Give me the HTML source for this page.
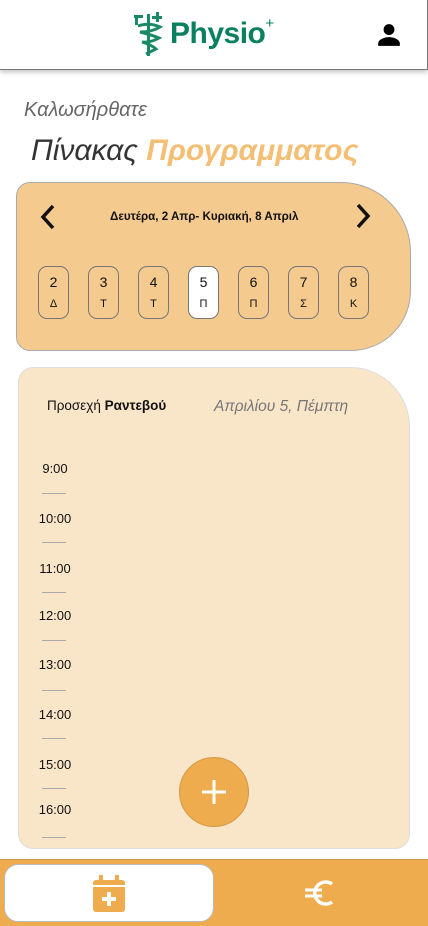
<!DOCTYPE html>
<html><head><meta charset="utf-8"><style>
*{margin:0;padding:0;box-sizing:border-box}
body{width:428px;height:926px;position:relative;background:#fff;font-family:"Liberation Sans","DejaVu Sans",sans-serif;overflow:hidden}
.hdr{position:absolute;left:0;top:0;width:428px;height:70px;border:1px solid #777;border-top:none;border-left:none;box-shadow:0 2px 5px rgba(0,0,0,.25);background:#fff}
.logo{position:absolute;left:170px;top:17px;font-size:30px;font-weight:bold;color:#0a8060;letter-spacing:-0.5px}
.logo sup{font-size:15px;position:relative;top:-4px;font-weight:normal}
.a{position:absolute}
.wk{left:16px;top:182px;width:395px;height:169px;background:#f4ca8f;border:1px solid #aaa;border-radius:14px 70px 60px 14px}
.chip{position:absolute;top:266px;width:31px;height:53px;border:1px solid #777;border-radius:9px;text-align:center;font-size:14px;color:#111}
.chip b{display:block;font-weight:normal;margin-top:7px}
.chip i{display:block;font-style:normal;font-size:11px;margin-top:8px}
.ap{left:18px;top:367px;width:392px;height:482px;background:#f9e5c8;border:1px solid #ddd;border-radius:15px 60px 15px 15px}
.t{position:absolute;left:36px;width:38px;text-align:center;font-size:13px;color:#111}
.ln{position:absolute;left:42px;width:24px;height:1px;background:#aaa}
</style></head><body>
<div class="hdr">
<svg class="a" style="left:132px;top:12px" width="34" height="46" viewBox="0 0 34 46" fill="#1a8a65">
<rect x="15" y="2" width="3" height="42"/><rect x="2" y="3" width="9" height="3"/><rect x="3" y="3" width="3" height="10"/><rect x="20" y="4" width="10" height="3"/><rect x="24" y="0" width="3" height="10"/>
<path d="M6 14 Q17 10 28 15 Q20 20 8 20 Q20 23 27 26 Q18 31 10 30 Q20 33 24 37 Q18 40 14 42" fill="none" stroke="#1a8a65" stroke-width="3"/>
</svg>
<div class="logo">Physio<sup>+</sup></div>
<svg class="a" style="left:376px;top:22px" width="26" height="26" viewBox="0 0 24 24"><circle cx="12" cy="7" r="5"/><path d="M2 22v-2c0-4 6-6 10-6s10 2 10 6v2z"/></svg>
</div>
<div class="a" style="left:24px;top:99px;font-size:20px;font-style:italic;color:#666">Καλωσήρθατε</div>
<div class="a" style="left:31px;top:134px;font-size:30px;font-style:italic;color:#333">Πίνακας <span style="color:#f4bf74;font-weight:bold">Προγραμματος</span></div>
<div class="a wk"></div>
<svg class="a" style="left:40px;top:204px" width="16" height="26" viewBox="0 0 16 26"><path d="M13 2 3 13l10 11" fill="none" stroke="#111" stroke-width="3.5"/></svg>
<svg class="a" style="left:355px;top:203px" width="16" height="26" viewBox="0 0 16 26"><path d="M3 2l10 11L3 24" fill="none" stroke="#111" stroke-width="3.5"/></svg>
<div class="a" style="left:110px;top:210px;font-size:11.6px;font-weight:bold;color:#111">Δευτέρα, 2 Απρ- Κυριακή, 8 Απριλ</div>
<div class="chip" style="left:38px"><b>2</b><i>Δ</i></div>
<div class="chip" style="left:88px"><b>3</b><i>Τ</i></div>
<div class="chip" style="left:138px"><b>4</b><i>Τ</i></div>
<div class="chip" style="left:188px;background:#fff"><b>5</b><i>Π</i></div>
<div class="chip" style="left:238px"><b>6</b><i>Π</i></div>
<div class="chip" style="left:288px"><b>7</b><i>Σ</i></div>
<div class="chip" style="left:338px"><b>8</b><i>Κ</i></div>
<div class="a ap"></div>
<div class="a" style="left:47px;top:398px;font-size:13.5px;color:#111">Προσεχή <b>Ραντεβού</b></div>
<div class="a" style="left:214px;top:398px;font-size:15.5px;font-style:italic;color:#777">Απριλίου 5, Πέμπτη</div>
<div class="t" style="top:461px">9:00</div><div class="ln" style="top:493px"></div>
<div class="t" style="top:511px">10:00</div><div class="ln" style="top:542px"></div>
<div class="t" style="top:561px">11:00</div><div class="ln" style="top:592px"></div>
<div class="t" style="top:608px">12:00</div><div class="ln" style="top:640px"></div>
<div class="t" style="top:657px">13:00</div><div class="ln" style="top:690px"></div>
<div class="t" style="top:707px">14:00</div><div class="ln" style="top:738px"></div>
<div class="t" style="top:757px">15:00</div><div class="ln" style="top:788px"></div>
<div class="t" style="top:802px">16:00</div><div class="ln" style="top:837px"></div>
<div class="a" style="left:179px;top:757px;width:70px;height:70px;border-radius:50%;background:#efac4e;border:1px solid #d49a44"></div>
<svg class="a" style="left:200px;top:778px" width="28" height="28"><path d="M14 2v24M2 14h24" stroke="#fff" stroke-width="3"/></svg>
<div class="a" style="left:0;top:859px;width:428px;height:67px;background:#efac4e;border-top:1px solid #c9954a"></div>
<div class="a" style="left:4px;top:864px;width:210px;height:58px;background:#fff;border:1px solid #bbb;border-radius:14px"></div>
<svg class="a" style="left:92px;top:875px" width="34" height="38" viewBox="0 0 34 38"><rect x="1" y="5" width="32" height="32" rx="3" fill="#efac4e"/><rect x="7" y="0" width="4" height="9" fill="#efac4e"/><rect x="23" y="0" width="4" height="9" fill="#efac4e"/><rect x="1" y="10" width="32" height="2" fill="#fff"/><path d="M17 17v14M10 24h14" stroke="#fff" stroke-width="4"/></svg>
<svg class="a" style="left:304px;top:878px" width="30" height="30" viewBox="0 0 30 30"><path d="M28 6 A11 11 0 1 0 28 24" fill="none" stroke="#fff" stroke-width="3.5"/><path d="M1 12h17M1 18h17" stroke="#fff" stroke-width="3"/></svg>
</body></html>
